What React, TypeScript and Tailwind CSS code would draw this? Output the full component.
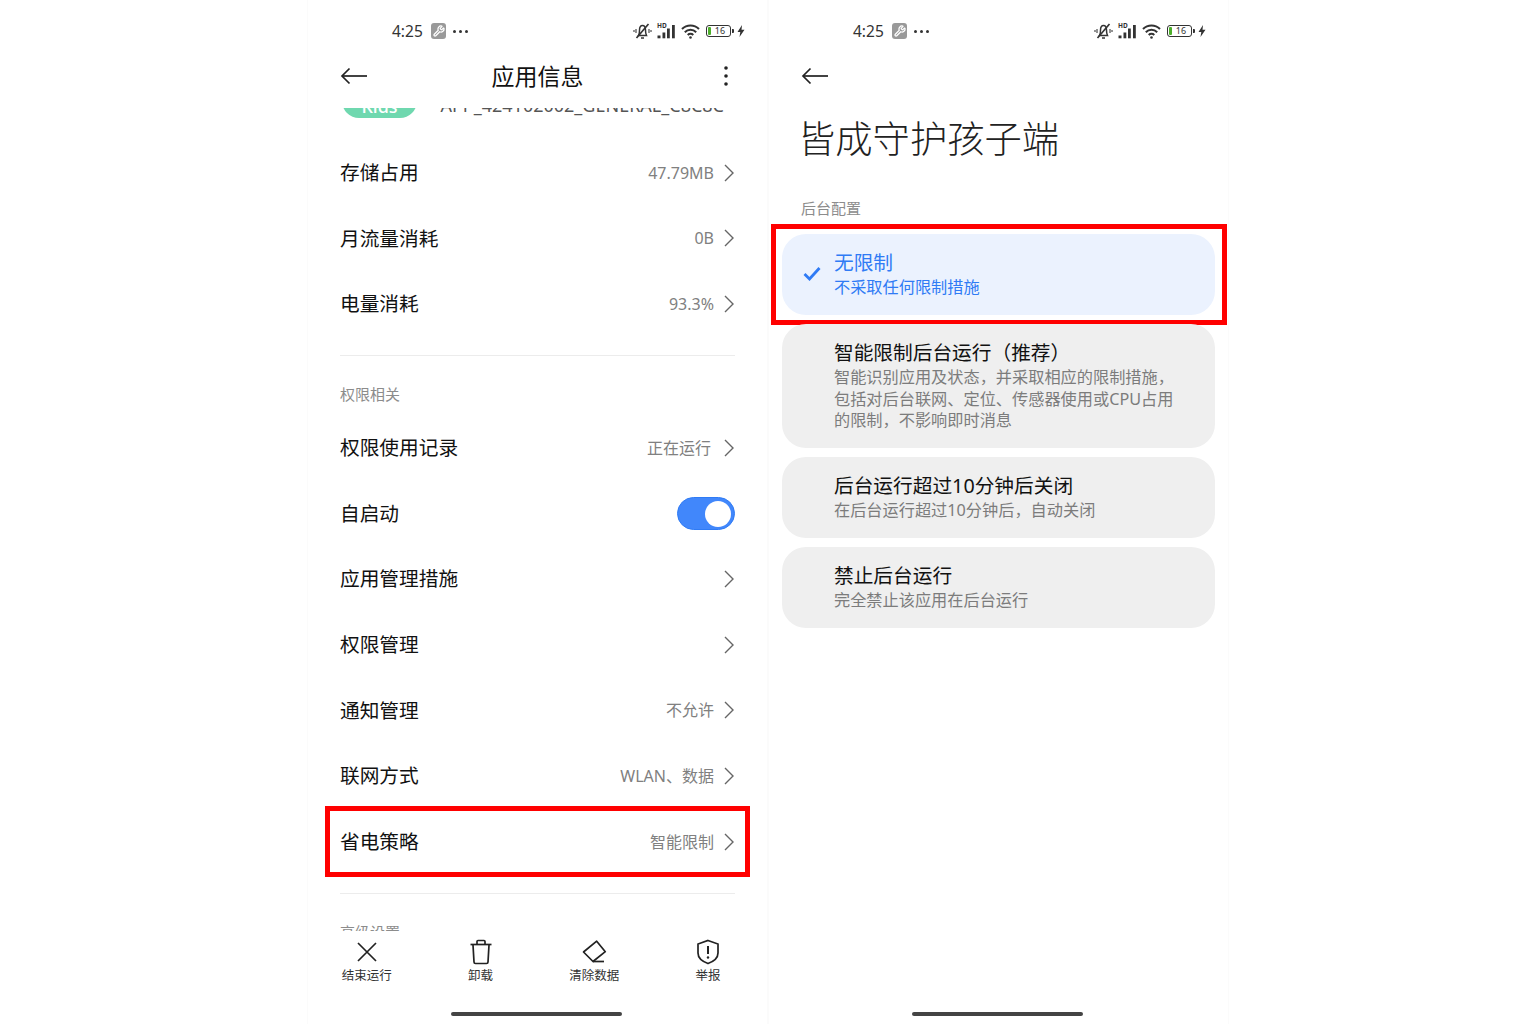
import { Wrench } from "lucide-react";

const fontClass = "font-['Noto_Sans','Noto_Sans_CJK_SC',sans-serif]";

function StatusBar() {
  return (
    <div className="h-[53px] pt-[20px] pl-[84px] pr-[22px] flex justify-between items-start">
      <div className="h-[22px] flex items-center">
        <span className="text-[15.5px] leading-[22px] text-[#333] w-[39px]">4:25</span>
        <span className="w-[15px] h-[16px] rounded-[3px] bg-[#999] flex items-center justify-center">
          <Wrench className="w-[12px] h-[12px] text-white" strokeWidth={2.5} />
        </span>
        <span className="ml-[7px] flex gap-[3px]">
          <i className="w-[3px] h-[3px] rounded-full bg-[#333]" />
          <i className="w-[3px] h-[3px] rounded-full bg-[#333]" />
          <i className="w-[3px] h-[3px] rounded-full bg-[#333]" />
        </span>
      </div>
      <div className="h-[22px] flex items-center">
        {/* muted bell */}
        <svg width="19" height="16" viewBox="0 0 19 16" fill="none" stroke="#333" strokeWidth="1.500">
          <path d="M5.500 12.500c1-1.500 1-3 1-5.200C6.500 4.500 7.800 2.500 9.500 2.500s3 2 3 4.800c0 2.200.2 3.700 1 5.200z" />
          <path d="M8 15h3" />
          <path d="M3.500 15L15.500 1" strokeWidth="1.700" />
          <path d="M3 6v4M1 7v2M16 6v4M18 7v2" stroke="#666" strokeWidth="1.400" />
        </svg>
        <span className="relative ml-[5px] w-[20px] h-[16px]">
          <span className="absolute left-0 -top-[1px] text-[6.5px] leading-[8px] font-bold text-[#333]">HD</span>
          <svg width="20" height="16" viewBox="0 0 20 16" fill="#333">
            <rect x="0.500" y="12.500" width="3" height="2.800" />
            <rect x="5.500" y="9.500" width="2.800" height="5.800" />
            <rect x="10" y="5.500" width="2.800" height="9.800" />
            <rect x="15" y="2" width="2.800" height="13.300" />
          </svg>
        </span>
        <svg className="ml-[4px]" width="19" height="15" viewBox="0 0 19 15" fill="none" stroke="#333" strokeWidth="2">
          <path d="M1 5a12 12 0 0 1 17 0" />
          <path d="M3.800 8.200a8 8 0 0 1 11.400 0" />
          <path d="M6.700 11a4 4 0 0 1 5.600 0" />
          <circle cx="9.500" cy="13.500" r="1.300" fill="#333" stroke="none" />
        </svg>
        <span className="ml-[6px] w-[25px] h-[12px] rounded-[3px] border border-[#333] relative flex items-center">
          <i className="absolute left-[1px] top-[1px] bottom-[1px] w-[3px] rounded-[1px] bg-[#4caf2a]" />
          <span className="w-full pl-[3px] text-center text-[9px] leading-[10px] text-[#333]">16</span>
        </span>
        <i className="ml-[1px] mr-[3px] w-[2px] h-[4px] rounded-r-[1px] bg-[#333]" />
        <svg width="8" height="12" viewBox="0 0 8 12" fill="#333">
          <path d="M5 0L0.500 7h2.800L2.500 12 7.500 4.800H4.500z" />
        </svg>
      </div>
    </div>
  );
}

function BackArrow() {
  return (
    <svg width="28" height="18" viewBox="0 0 28 18" fill="none" stroke="#222" strokeWidth="1.700">
      <path d="M27 9H2" />
      <path d="M9.500 1.500L2 9l7.500 7.500" />
    </svg>
  );
}

function Chevron() {
  return (
    <svg className="ml-[10px] mr-[1px] shrink-0" width="10" height="18" viewBox="0 0 10 18" fill="none" stroke="#666" strokeWidth="1.400">
      <path d="M1 1l8 8-8 8" />
    </svg>
  );
}

function Row({
  title,
  value,
  highlight,
  running,
}: {
  title: string;
  value?: string;
  highlight?: boolean;
  running?: boolean;
}) {
  return (
    <div className="relative h-[65.6px] flex items-center justify-between">
      <span className="text-[19.7px] text-[#111]">{title}</span>
      <span className="flex items-center">
        {value && <span className={`text-[16px] text-[#808080] ${running ? "mr-[3px]" : ""}`}>{value}</span>}
        <Chevron />
      </span>
      {highlight && (
        <div className="absolute -top-[3px] -bottom-[3px] -left-[15px] -right-[15px] border-[5px] border-[#ff0000]" />
      )}
    </div>
  );
}

function SectionLabel({ text }: { text: string }) {
  return <div className="pt-[27px] pb-[10.5px] text-[15px] leading-[22px] text-[#8c8c8c]">{text}</div>;
}

function ToolbarItem({ label, children }: { label: string; children: React.ReactNode }) {
  return (
    <div className="flex flex-col items-center">
      <div className="h-[26px] flex items-center justify-center">{children}</div>
      <span className="mt-[2px] text-[12.5px] leading-[18px] text-[#333]">{label}</span>
    </div>
  );
}

function AppInfo() {
  return (
    <div className="w-[461px] h-[1024px] flex flex-col overflow-hidden border-x border-[#fbfbfb]">
      <StatusBar />
      <div className="h-[55px] pb-[9px] px-[32px] flex items-center">
        <div className="flex-1">
          <BackArrow />
        </div>
        <span className="text-[23px] text-[#111]">应用信息</span>
        <div className="flex-1 flex justify-end">
          <svg width="4" height="20" viewBox="0 0 4 20" fill="#222" className="mr-[7px]">
            <circle cx="2" cy="2" r="1.800" />
            <circle cx="2" cy="10" r="1.800" />
            <circle cx="2" cy="18" r="1.800" />
          </svg>
        </div>
      </div>

      <div className="flex-1 overflow-hidden px-[32px]">
        <div className="h-[32px] flex items-start justify-between overflow-hidden">
          <div className="ml-[2px] -mt-[24px] w-[75px] h-[34px] rounded-b-[17px] bg-[#6fd8af] flex items-end justify-center">
            <span className="text-[18px] leading-[24px] text-white font-medium">Kids</span>
          </div>
          <span className="-mt-[13px] mr-[11px] text-[18px] leading-[20px] text-[#555]">APP_424102002_GENERAL_C8C8C</span>
        </div>
        <Row title="存储占用" value="47.79MB" />
        <Row title="月流量消耗" value="0B" />
        <Row title="电量消耗" value="93.3%" />
        <div className="mt-[18px] h-px bg-[#ececec]" />
        <SectionLabel text="权限相关" />
        <Row title="权限使用记录" value="正在运行" running />
        <div className="h-[65.6px] flex items-center justify-between">
          <span className="text-[19.7px] text-[#111]">自启动</span>
          <span className="w-[58px] h-[33px] rounded-full bg-[#4187fb] border-[1.5px] border-[#2f7bf5] flex items-center justify-end pr-[3px]">
            <i className="w-[26px] h-[26px] rounded-full bg-white" />
          </span>
        </div>
        <Row title="应用管理措施" />
        <Row title="权限管理" />
        <Row title="通知管理" value="不允许" />
        <Row title="联网方式" value="WLAN、数据" />
        <Row title="省电策略" value="智能限制" highlight />
        <div className="mt-[18.5px] h-px bg-[#ececec]" />
        <SectionLabel text="高级设置" />
      </div>

      <div className="h-[93px] flex flex-col">
        <div className="pt-[8px] px-[2px] grid grid-cols-4">
          <ToolbarItem label="结束运行">
            <svg width="22" height="22" viewBox="0 0 22 22" fill="none" stroke="#222" strokeWidth="1.700">
              <path d="M2 2l18 18M20 2L2 20" />
            </svg>
          </ToolbarItem>
          <ToolbarItem label="卸载">
            <svg width="24" height="26" viewBox="0 0 24 26" fill="none" stroke="#222" strokeWidth="1.700">
              <path d="M1.500 5.500h21" />
              <path d="M8 5V2.500c0-.6.400-1 1-1h6c.6 0 1 .4 1 1V5" />
              <path d="M4 6l1 17c0 1 .5 1.500 1.500 1.500h11c1 0 1.500-.5 1.500-1.500l1-17" />
            </svg>
          </ToolbarItem>
          <ToolbarItem label="清除数据">
            <svg width="26" height="24" viewBox="0 0 26 24" fill="none" stroke="#222" strokeWidth="1.700">
              <path d="M15.700 1.200L24.300 11.700 12 21.500 2.500 12z" strokeLinejoin="round" />
              <path d="M12 21.500h11" />
            </svg>
          </ToolbarItem>
          <ToolbarItem label="举报">
            <svg width="24" height="26" viewBox="0 0 24 26" fill="none" stroke="#222" strokeWidth="1.700">
              <path d="M12 1.500l10 3.500v9c0 5-4.500 8.500-10 10.500C6.500 22.500 2 19 2 14V5z" />
              <path d="M12 7v8" strokeWidth="2" />
              <circle cx="12" cy="18.500" r="1.200" fill="#222" stroke="none" />
            </svg>
          </ToolbarItem>
        </div>
        <div className="mt-auto mb-[8px] ml-[143px] w-[171px] h-[4px] rounded-full bg-[#444]" />
      </div>
    </div>
  );
}

function OptionCard({
  title,
  lines,
  selected,
}: {
  title: string;
  lines: string[];
  selected?: boolean;
}) {
  return (
    <div className={`relative rounded-[24px] pt-[17px] pb-[16px] flex items-center ${selected ? "bg-[#ebf2fe]" : "bg-[#efefef]"}`}>
      <div className="w-[52px] shrink-0 pl-[21px] -mt-[2px]">
        {selected && (
          <svg width="18" height="15" viewBox="0 0 18 15" fill="none" stroke="#2f7bf5" strokeWidth="2.800">
            <path d="M1.500 8l5 5L16.500 2" />
          </svg>
        )}
      </div>
      <div>
        <div className={`text-[19.7px] leading-[24px] ${selected ? "text-[#2f7bf5]" : "text-[#111]"}`}>{title}</div>
        <div className={`mt-[2px] text-[16.2px] leading-[21.5px] ${selected ? "text-[#2f7bf5]" : "text-[#7c7c7c]"}`}>
          {lines.map((line) => (
            <div key={line}>{line}</div>
          ))}
        </div>
      </div>
      {selected && (
        <div className="absolute -top-[10px] -bottom-[10px] -left-[11px] -right-[12px] border-[5px] border-[#ff0000]" />
      )}
    </div>
  );
}

function BackgroundConfig() {
  return (
    <div className="w-[461px] h-[1024px] flex flex-col overflow-hidden border-x border-[#fbfbfb]">
      <StatusBar />
      <div className="h-[55px] pb-[9px] px-[32px] flex items-center">
        <BackArrow />
      </div>
      <div className="mt-[8px] px-[29px] text-[37.3px] leading-[46px] font-light text-[#222]">皆成守护孩子端</div>
      <div className="mt-[35px] px-[32px] text-[15px] leading-[22px] text-[#8c8c8c]">后台配置</div>
      <div className="mt-[15px] mx-[13px] flex flex-col gap-[9.5px]">
        <OptionCard title="无限制" lines={["不采取任何限制措施"]} selected />
        <OptionCard
          title="智能限制后台运行（推荐）"
          lines={[
            "智能识别应用及状态，并采取相应的限制措施，",
            "包括对后台联网、定位、传感器使用或CPU占用",
            "的限制，不影响即时消息",
          ]}
        />
        <OptionCard title="后台运行超过10分钟后关闭" lines={["在后台运行超过10分钟后，自动关闭"]} />
        <OptionCard title="禁止后台运行" lines={["完全禁止该应用在后台运行"]} />
      </div>
      <div className="mt-auto mb-[8px] ml-[143px] w-[171px] h-[4px] rounded-full bg-[#444]" />
    </div>
  );
}

export default function App() {
  return (
    <div className={`w-[1536px] h-[1024px] bg-white flex pl-[307px] ${fontClass}`}>
      <AppInfo />
      <BackgroundConfig />
    </div>
  );
}
